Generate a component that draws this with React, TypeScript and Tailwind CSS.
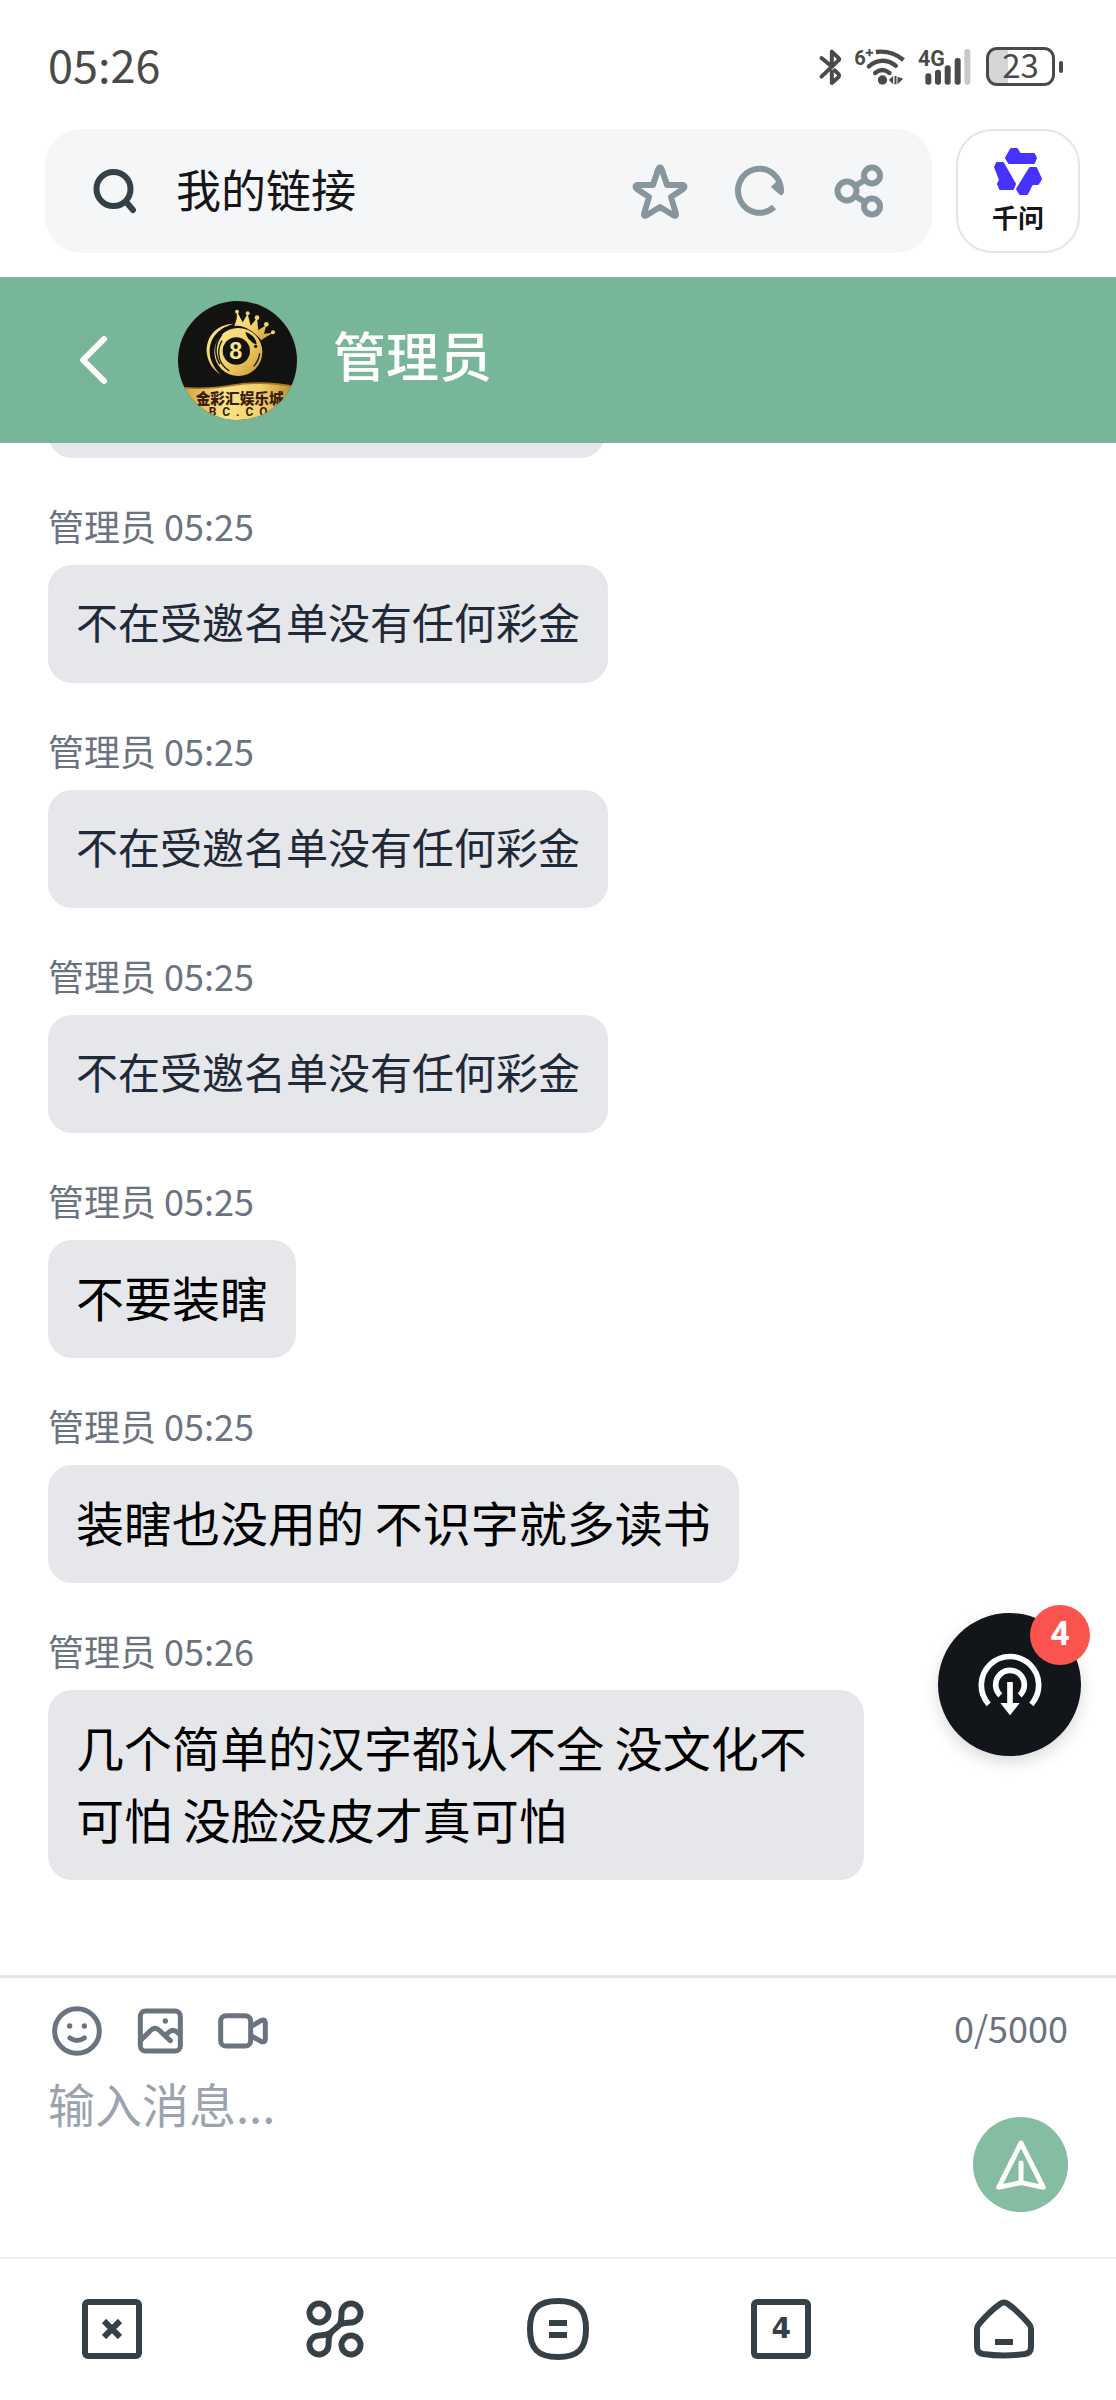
import { useState } from "react";

interface Message {
  id: number;
  author: string;
  time: string;
  text: string;
  large?: boolean;
}

const MESSAGES: Message[] = [
  { id: 2, author: "管理员", time: "05:25", text: "不在受邀名单没有任何彩金" },
  { id: 3, author: "管理员", time: "05:25", text: "不在受邀名单没有任何彩金" },
  { id: 4, author: "管理员", time: "05:25", text: "不在受邀名单没有任何彩金" },
  { id: 5, author: "管理员", time: "05:25", text: "不要装瞎", large: true },
  { id: 6, author: "管理员", time: "05:25", text: "装瞎也没用的 不识字就多读书", large: true },
  {
    id: 7,
    author: "管理员",
    time: "05:26",
    text: "几个简单的汉字都认不全 没文化不可怕 没脸没皮才真可怕",
    large: true,
  },
];

const MAX_LENGTH = 5000;

function StatusBar() {
  return (
    <div className="flex h-[129px] shrink-0 items-center justify-between pt-1 pr-[53px] pl-12 text-[#4a4a4a]">
      <time className="pb-1.5 text-[45px] leading-none">05:26</time>
      <div className="flex items-center">
        {/* bluetooth */}
        <svg viewBox="52 49 74 117" className="h-[39px] w-[25px]" fill="none" stroke="currentColor" strokeWidth="12" strokeLinecap="round" strokeLinejoin="round">
          <path d="M62 82 L92 107 M62 138 L115 87 Q116 84 112 81 L93 63 V106 M93 124 V157 L114 138 Q116 134 113 130 L101 119" />
        </svg>
        {/* wifi */}
        <svg viewBox="160 49 158 117" className="ml-[11px] h-[39px] w-[53px] overflow-visible" fill="none" stroke="currentColor" strokeWidth="13">
          <path strokeLinecap="butt" d="M225 64 Q272 58 308 88" />
          <path strokeLinecap="round" d="M204 107 Q243 75 285 105 M223 127 Q244 109 266 127" />
          <circle cx="245" cy="148" r="14" fill="currentColor" stroke="none" />
          <path fill="currentColor" stroke="none" d="M264 148 L277 136 V161 Z M281 136 h6 v25 h-6 Z M290 138 L307 144 L290 161 Z" />
          <text x="160" y="102" fill="currentColor" stroke="none" fontSize="60" className="font-['Roboto',sans-serif] font-bold">
            6
          </text>
          <path strokeWidth="6" d="M195 66 h22 M206 55 v22" />
        </svg>
        {/* mobile signal */}
        <svg viewBox="350 49 162 117" className="ml-[10px] h-[39px] w-[54px] overflow-visible">
          <text x="353" y="107" fill="currentColor" fontSize="64" className="font-['Roboto',sans-serif] font-bold">
            4G
          </text>
          <g fill="currentColor">
            <rect x="375" y="128" width="18" height="34" rx="8" />
            <rect x="404" y="117" width="18" height="45" rx="8" />
            <rect x="433" y="104" width="18" height="58" rx="8" />
            <rect x="463" y="82" width="18" height="80" rx="8" />
          </g>
          <rect x="492" y="55" width="18" height="107" rx="8" fill="#c9c9c9" />
        </svg>
        <div className="ml-[15px] flex items-center gap-1">
          <div className="flex h-[39px] w-[69px] items-center justify-center rounded-[11px] border-[3px] border-[#4a4a4a] bg-linear-to-r from-[#d6d6d6] from-30% to-white to-30% pb-1 text-[33px] leading-none">
            23
          </div>
          <div className="h-3 w-1 rounded-sm bg-[#4a4a4a]" />
        </div>
      </div>
    </div>
  );
}

function AddressBar() {
  return (
    <div className="mr-9 mb-6 ml-[45px] flex h-[124px] shrink-0 gap-6">
      <div className="flex min-w-0 flex-1 items-center rounded-[36px] bg-[#f4f6f8] pr-11 pl-12">
        <svg viewBox="0 0 46 46" className="size-[46px]" fill="none" stroke="#364147" strokeWidth="6" strokeLinecap="round">
          <circle cx="20.500" cy="21" r="17" />
          <path d="M34 35 L40 42" />
        </svg>
        <input
          aria-label="搜索或输入网址"
          defaultValue="我的链接"
          className="ml-[37px] min-w-0 flex-1 bg-transparent pb-1 text-[45px] leading-[66px] text-[#14161a] outline-none"
        />
        <div className="flex gap-11 text-[#87969d]">
          <button aria-label="收藏">
            <svg viewBox="0 0 56 56" className="size-14" fill="none" stroke="currentColor" strokeWidth="6" strokeLinejoin="round">
              <path d="M28 5 Q29 4 30 7 L35 22 L51 22 Q54 23 51 26 L39 34 L44 51 Q44 54 41 52 L28 44 L15 52 Q12 54 12 51 L17 34 L5 26 Q2 23 5 22 L21 22 L26 7 Q27 4 28 5 Z" />
            </svg>
          </button>
          <button aria-label="刷新">
            <svg viewBox="0 0 56 56" className="size-14" fill="none" stroke="currentColor" strokeWidth="6">
              <path d="M42 44 A21.500 22 0 1 1 49 28" />
              <path d="M39 24 L46 17 Q52 22 52 29 Q51 34 47 31 Z" fill="currentColor" stroke="none" />
            </svg>
          </button>
          <button aria-label="分享">
            <svg viewBox="0 0 56 56" className="size-14" fill="none" stroke="currentColor" strokeWidth="6">
              <circle cx="15" cy="28" r="9.500" />
              <circle cx="40" cy="12.500" r="8" />
              <circle cx="40" cy="43.500" r="8" />
              <path d="M23 23 L33 17 M23 33 L33 39" />
            </svg>
          </button>
        </div>
      </div>
      <button className="flex w-[124px] flex-col items-center justify-center rounded-[36px] border-2 border-[#e1e6e8] bg-white text-[26px] leading-9 font-bold text-[#14161a]">
        <svg viewBox="0 0 48 48" className="mb-1 size-12" fill="#4733ff" stroke="#4733ff" strokeWidth="2" strokeLinejoin="round">
          <path d="M17 2 H23 L26 7 H40 L42 11 L40 16 H15 L12 11 Z" />
          <path d="M3 16 H9 L21 37 L19 42 H6 L4 37 L6 33 L1 20 Z" />
          <path d="M36 21 H42 L47 32 L44 37 H38 L33 47 H26 L23 42 Z" />
        </svg>
        千问
      </button>
    </div>
  );
}

function Avatar() {
  return (
    <svg viewBox="54 33 357 357" className="size-[119px] rounded-full" role="img" aria-label="管理员头像">
      <defs>
        <linearGradient id="gold" x1="0" y1="0" x2="1" y2="1">
          <stop offset="0" stopColor="#fbe890" />
          <stop offset="0.5" stopColor="#f3d368" />
          <stop offset="1" stopColor="#c8932f" />
        </linearGradient>
        <linearGradient id="band" x1="0" y1="0" x2="1" y2="0">
          <stop offset="0" stopColor="#c99a35" />
          <stop offset="0.4" stopColor="#f9e58c" />
          <stop offset="0.7" stopColor="#f0d069" />
          <stop offset="1" stopColor="#b98524" />
        </linearGradient>
      </defs>
      <rect x="54" y="33" width="357" height="357" fill="#121211" />
      <path d="M222 101 C165 103 135 145 141 193 C145 221 162 242 182 254 C160 232 149 209 149 185 C149 140 180 112 222 101 Z" fill="url(#gold)" />
      <circle cx="235" cy="186" r="72" fill="url(#gold)" />
      <path d="M185 134 Q166 158 168 186 Q170 208 180 222" fill="none" stroke="#121211" strokeWidth="5" />
      <path d="M208 243 Q178 225 176 190 Q176 168 186 152 M281 229 Q296 213 299 190" fill="none" stroke="#121211" strokeWidth="4" />
      <path d="M256 125 Q288 137 290 163 Q278 162 270 151 Q261 144 256 125 Z" fill="#121211" />
      <circle cx="287" cy="169" r="5" fill="#121211" />
      <circle cx="229" cy="183" r="41" fill="#121211" />
      <text x="227" y="208" textAnchor="middle" fontSize="70" fill="#f9e58c" className="font-['Liberation_Sans',sans-serif] font-bold">
        8
      </text>
      <path d="M223 108 Q262 103 304 151 L312 145 L340 128 L312 131 L319 105 L295 121 L291 84 L272 107 L263 71 L248 97 L231 65 L230 87 Z" fill="url(#gold)" />
      <g fill="#f3d368">
        <circle cx="231" cy="65" r="6" />
        <circle cx="263" cy="70" r="6" />
        <circle cx="291" cy="83" r="7" />
        <circle cx="319" cy="103" r="7" />
        <circle cx="339" cy="127" r="6" />
      </g>
      <path d="M54 289 Q130 299 220 283 Q310 268 411 289 V390 H54 Z" fill="#a9771f" />
      <path d="M54 293 Q130 303 220 288 Q310 274 411 294 V390 H54 Z" fill="url(#band)" />
      <text x="107" y="341" fontSize="44" fill="#3a1d0b" className="font-['Noto_Sans_CJK_SC',sans-serif] font-black">
        金彩汇娱乐城
      </text>
      <text x="146" y="378" fontSize="36" fill="#3a1d0b" className="font-['Roboto',sans-serif] font-bold whitespace-pre">
        {"B  C  .  C  O  M"}
      </text>
    </svg>
  );
}

function ChatHeader() {
  return (
    <header className="flex h-[166px] shrink-0 items-center bg-[#77b699] pl-16">
      <button aria-label="返回">
        <svg viewBox="0 0 60 60" className="size-[60px]" fill="none" stroke="white" strokeWidth="6" strokeLinecap="round" strokeLinejoin="round">
          <path d="M40 9 L19 30 L40 51" />
        </svg>
      </button>
      <div className="mr-9 ml-[54px]">
        <Avatar />
      </div>
      <h1 className="pb-3 text-[53px] leading-[72px] font-medium text-white">管理员</h1>
    </header>
  );
}

function MessageItem({ message }: { message: Message }) {
  return (
    <li className="flex shrink-0 flex-col items-start">
      <p className="mb-[18px] text-4xl leading-11 text-[#6b7280]">
        {message.author} {message.time}
      </p>
      <div
        className={`max-w-[80%] rounded-3xl bg-[#e5e7eb] px-7 pt-5 pb-[26px] ${
          message.large ? "text-5xl leading-[72px] text-black" : "text-[42px] leading-[72px] text-[#1f2937]"
        }`}
      >
        {message.text}
      </div>
    </li>
  );
}

function FloatingButton() {
  return (
    <button
      aria-label="下载"
      className="absolute right-[35px] bottom-[219px] flex size-[143px] items-center justify-center rounded-full bg-[#12161a] shadow-[0_6px_16px_rgba(0,0,0,0.15)]"
    >
      <svg viewBox="-105 -105 210 210" className="size-[70px]" fill="none" stroke="white" strokeWidth="17">
        <path d="M-64 58 A86 86 0 1 1 64 58" />
        <path d="M-29 31 A43 43 0 1 1 29 31" />
        <path d="M0 -9 V60" />
        <path d="M-29 54 H29 L0 91 Z" fill="white" stroke="none" />
      </svg>
      <span className="absolute -top-2 -right-[9px] flex size-15 items-center justify-center rounded-full bg-[#fb544f] pb-1 font-['Roboto',sans-serif] text-[34px] leading-none font-bold text-white">
        4
      </span>
    </button>
  );
}

function Composer() {
  const [text, setText] = useState("");

  return (
    <form className="shrink-0 border-t-[3px] border-[#e5e5e5] px-12 pt-6 pb-[45px]" onSubmit={(e) => e.preventDefault()}>
      <div className="flex items-center gap-[25px] text-[#6b7280]">
        <button type="button" aria-label="表情">
          <svg viewBox="144 127 174 174" className="size-[58px]" fill="none" stroke="currentColor" strokeWidth="15" strokeLinecap="round">
            <circle cx="231" cy="214" r="67" />
            <path d="M210 235 Q231 250 253 235" />
            <circle cx="209" cy="199" r="8" fill="currentColor" stroke="none" />
            <circle cx="253" cy="199" r="8" fill="currentColor" stroke="none" />
          </svg>
        </button>
        <button type="button" aria-label="图片">
          <svg viewBox="393 127 174 174" className="size-[58px]" fill="none" stroke="currentColor" strokeWidth="15" strokeLinecap="round" strokeLinejoin="round">
            <rect x="421" y="154" width="120" height="120" rx="16" />
            <path d="M424 240 L451 213 Q465 199 479 213 L511 243 M496 228 L506 218 Q519 206 532 218 L538 223" />
            <circle cx="496" cy="184" r="8" fill="currentColor" stroke="none" />
          </svg>
        </button>
        <button type="button" aria-label="视频">
          <svg viewBox="643 127 174 174" className="size-[58px]" fill="none" stroke="currentColor" strokeWidth="15" strokeLinejoin="round">
            <rect x="663" y="168" width="90" height="91" rx="16" />
            <path d="M755 200 L784 183 Q797 177 797 190 V238 Q797 250 784 245 L755 229" />
          </svg>
        </button>
        <span className="ml-auto pb-2 text-4xl leading-12">
          {text.length}/{MAX_LENGTH}
        </span>
      </div>
      <div className="flex items-end pt-2">
        <textarea
          aria-label="输入消息"
          placeholder="输入消息..."
          maxLength={MAX_LENGTH}
          value={text}
          onChange={(e) => setText(e.target.value)}
          className="h-36 min-w-0 flex-1 resize-none text-[47px] leading-[70px] outline-none placeholder:text-[#9ca3af]"
        />
        <button type="submit" aria-label="发送" className="flex size-[95px] items-center justify-center rounded-full bg-[#84bda2]">
          <svg viewBox="291 538 144 144" className="size-12 overflow-visible" fill="none" stroke="white" strokeWidth="15" strokeLinecap="round" strokeLinejoin="round">
            <path d="M363 544 L430 677 L363 663 L296 677 Z M363 663 V604" />
          </svg>
        </button>
      </div>
    </form>
  );
}

function BottomNav() {
  return (
    <nav className="grid h-[143px] shrink-0 grid-cols-5 place-items-center border-t-2 border-[#f0f0f0] pb-0.5 text-[#364147]">
      <button aria-label="关闭" className="flex size-15 items-center justify-center rounded-md border-6 border-[#364147]">
        <svg viewBox="0 0 20 20" className="size-5" stroke="currentColor" strokeWidth="6">
          <path d="M2 2 L18 18 M18 2 L2 18" />
        </svg>
      </button>
      <button aria-label="工具">
        <svg viewBox="0 0 60 60" className="size-15" fill="none" stroke="currentColor" strokeWidth="6">
          <circle cx="14" cy="14" r="9.500" />
          <circle cx="46" cy="46" r="9.500" />
          <path d="M46 23.500 A9.500 9.500 0 1 0 36.500 14 C36.500 24 35 27 30 30 C25 33 23.500 36.500 23.500 46 A9.500 9.500 0 1 1 14 36.500 C24 36 25 34 30 30 C35 25 36 24 46 23.500 Z" />
        </svg>
      </button>
      <button aria-label="菜单">
        <svg viewBox="0 0 64 64" className="size-16" fill="none" stroke="currentColor" strokeWidth="6">
          <path d="M32 4 C52 4 60 12 60 32 C60 52 52 60 32 60 C12 60 4 52 4 32 C4 12 12 4 32 4 Z" />
          <path d="M23 26 H41 M23 38 H41" />
        </svg>
      </button>
      <button
        aria-label="标签页 4"
        className="flex size-15 items-center justify-center rounded-md border-6 border-[#364147] font-['DejaVu_Sans',sans-serif] text-[28px] leading-none font-bold"
      >
        4
      </button>
      <button aria-label="主页">
        <svg viewBox="0 0 60 60" className="size-15" fill="none" stroke="currentColor" strokeWidth="6" strokeLinejoin="round">
          <path d="M26 5 Q30 2 34 5 Q44 12 55 25 Q57 27 57 30 V48 Q57 54 51 55 Q30 58 9 55 Q3 54 3 48 V30 Q3 27 5 25 Q16 12 26 5 Z" />
          <path d="M21 43 H39" />
        </svg>
      </button>
    </nav>
  );
}

export default function App() {
  return (
    <div className="flex h-screen flex-col bg-white font-['Noto_Sans_CJK_SC',sans-serif]">
      <StatusBar />
      <AddressBar />
      <ChatHeader />
      <main className="relative min-h-0 flex-1">
        {/* newest message stays at the bottom, older ones slide under the header */}
        <ul className="flex h-full flex-col justify-end gap-[45px] overflow-hidden px-12 pb-[95px]">
          <li aria-hidden="true" className="h-12 w-[557px] shrink-0 rounded-3xl bg-[#e5e7eb]" />
          {MESSAGES.map((message) => (
            <MessageItem key={message.id} message={message} />
          ))}
        </ul>
        <FloatingButton />
      </main>
      <Composer />
      <BottomNav />
    </div>
  );
}
